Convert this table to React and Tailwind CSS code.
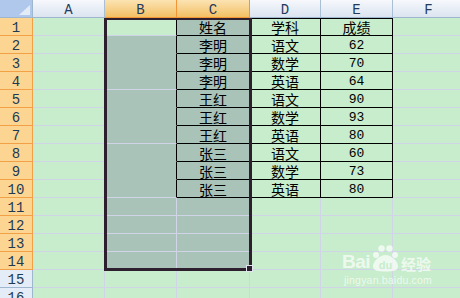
const COL_W = ["w-[72px]", "w-[72px]", "w-[73px]", "w-[71px]", "w-[72px]", "w-[72px]"];
const LETTERS = ["A", "B", "C", "D", "E", "F"];

// rows 1..10 hold the little score table in C:E
const DATA = {
  1: ["姓名", "学科", "成绩"],
  2: ["李明", "语文", "62"],
  3: ["李明", "数学", "70"],
  4: ["李明", "英语", "64"],
  5: ["王红", "语文", "90"],
  6: ["王红", "数学", "93"],
  7: ["王红", "英语", "80"],
  8: ["张三", "语文", "60"],
  9: ["张三", "数学", "73"],
  10: ["张三", "英语", "80"],
};

// B2:B4, B5:B7, B8:B10 are merged, so no line under their first two rows
const MERGED_NO_BOTTOM = [2, 3, 5, 6, 8, 9];

const ColHeader = () => (
  <div className="flex h-[18px]">
    <div className="relative w-[33px] shrink-0 bg-[#b0c8eb] border-r border-b border-[#9eb6ce]">
      <svg className="absolute right-[2px] bottom-[2px]" width="11" height="10" viewBox="0 0 11 10">
        <polygon points="11,0 11,10 0,10" fill="#e3ebf6" />
      </svg>
    </div>
    {LETTERS.map((l, i) => {
      const sel = i === 1 || i === 2;
      return (
        <div
          key={l}
          className={`${COL_W[i]} shrink-0 flex items-center justify-center pt-[2px] text-[14px] leading-none text-[#1f3a5c] border-b ${
            sel
              ? "bg-linear-to-b from-[#fbe3b2] to-[#f3c062] border-r border-r-[#f29536] border-b-[#f29536]"
              : "bg-linear-to-b from-[#f6f8fc] to-[#dbe4f0] border-r border-r-[#a9bfd6] border-b-[#9eb6ce]"
          }`}
        >
          {l}
        </div>
      );
    })}
  </div>
);

const Cell = ({ r, c }) => {
  const inTable = r <= 10 && c >= 2 && c <= 4;
  const sel = (c === 1 && r >= 2 && r <= 14) || (c === 2 && r <= 14);

  let right = "border-r-[#cfd5e6]";
  if (inTable || (c === 1 && r <= 10)) right = "border-r-black";

  let bottom = "border-b-[#cfd5e6]";
  if (inTable) bottom = "border-b-black";
  else if (c === 1 && MERGED_NO_BOTTOM.includes(r)) bottom = "border-b-[#aac3b8]";

  const top = inTable && r === 1 ? "shadow-[inset_0_1px_0_#000]" : "";
  const text = inTable ? DATA[r][c - 2] : "";
  const num = /^\d+$/.test(text);

  return (
    <div
      className={`${COL_W[c]} shrink-0 flex items-center justify-center border-r border-b ${right} ${bottom} ${top} ${
        sel ? "bg-[#aac3b8]" : ""
      } text-black`}
    >
      {text &&
        (num ? (
          <span className="block text-[13px] leading-none font-['Liberation_Mono',monospace] pt-[1px]">{text}</span>
        ) : (
          <span className="block text-[14px] leading-none font-['Noto_Sans_CJK_SC',sans-serif]">{text}</span>
        ))}
    </div>
  );
};

const Row = ({ r }) => {
  const sel = r <= 14;
  return (
    <div className="flex h-[18px]">
      <div
        className={`w-[33px] shrink-0 flex items-center justify-center pt-[2px] text-[14px] leading-none text-[#1e3a52] border-r border-b ${
          sel ? "bg-[#fdd592] border-[#f2a046]" : "bg-[#e4ecf7] border-[#9eb6ce]"
        }`}
      >
        {r}
      </div>
      {LETTERS.map((l, c) => (
        <Cell key={l} r={r} c={c} />
      ))}
    </div>
  );
};

const Watermark = () => (
  <div className="absolute left-[342px] top-[244px] text-white/70 pointer-events-none">
    <div className="flex items-end h-[28px]">
      <span className="font-['Liberation_Sans',sans-serif] font-bold text-[19px] leading-none tracking-[-0.5px] pb-[1px]">
        Bai
      </span>
      <svg width="29" height="28" viewBox="0 0 29 28" className="mx-[1px]">
        <g fill="currentColor">
          <circle cx="5" cy="11" r="3" />
          <circle cx="10.5" cy="4.5" r="3.2" />
          <circle cx="18.5" cy="4.5" r="3.2" />
          <circle cx="24" cy="11" r="3" />
          <path d="M14.5 11 C21 11 27 18 27 22 C27 26.5 23 27.5 14.5 27.5 C6 27.5 2 26.5 2 22 C2 18 8 11 14.5 11 Z" />
        </g>
        <text x="14.5" y="25" textAnchor="middle" fontSize="11" fontWeight="bold" fontFamily="Liberation Sans" fill="#c7edcc">
          du
        </text>
      </svg>
      <span className="font-['Noto_Sans_CJK_SC',sans-serif] font-bold text-[15px] leading-none pb-[1px]">经验</span>
    </div>
    <div className="font-['Liberation_Sans',sans-serif] text-[10.5px] leading-none mt-[3px] ml-[2px] tracking-[0.2px]">
      jingyan.baidu.com
    </div>
  </div>
);

export default function App() {
  return (
    <div className="relative w-[460px] h-[298px] overflow-hidden bg-[#c7edcc] font-['Liberation_Mono',monospace]">
      <ColHeader />
      {Array.from({ length: 16 }, (_, i) => (
        <Row key={i} r={i + 1} />
      ))}

      {/* selection B1:C14 */}
      <div className="absolute left-[104px] top-[18px] w-[148px] h-[253px] border-[3px] border-t-2 border-[#2e1f2e]" />
      <div className="absolute left-[246px] top-[265px] w-[7px] h-[7px] bg-[#2e1f2e] border border-[#dfe6ee]" />

      <Watermark />
    </div>
  );
}
